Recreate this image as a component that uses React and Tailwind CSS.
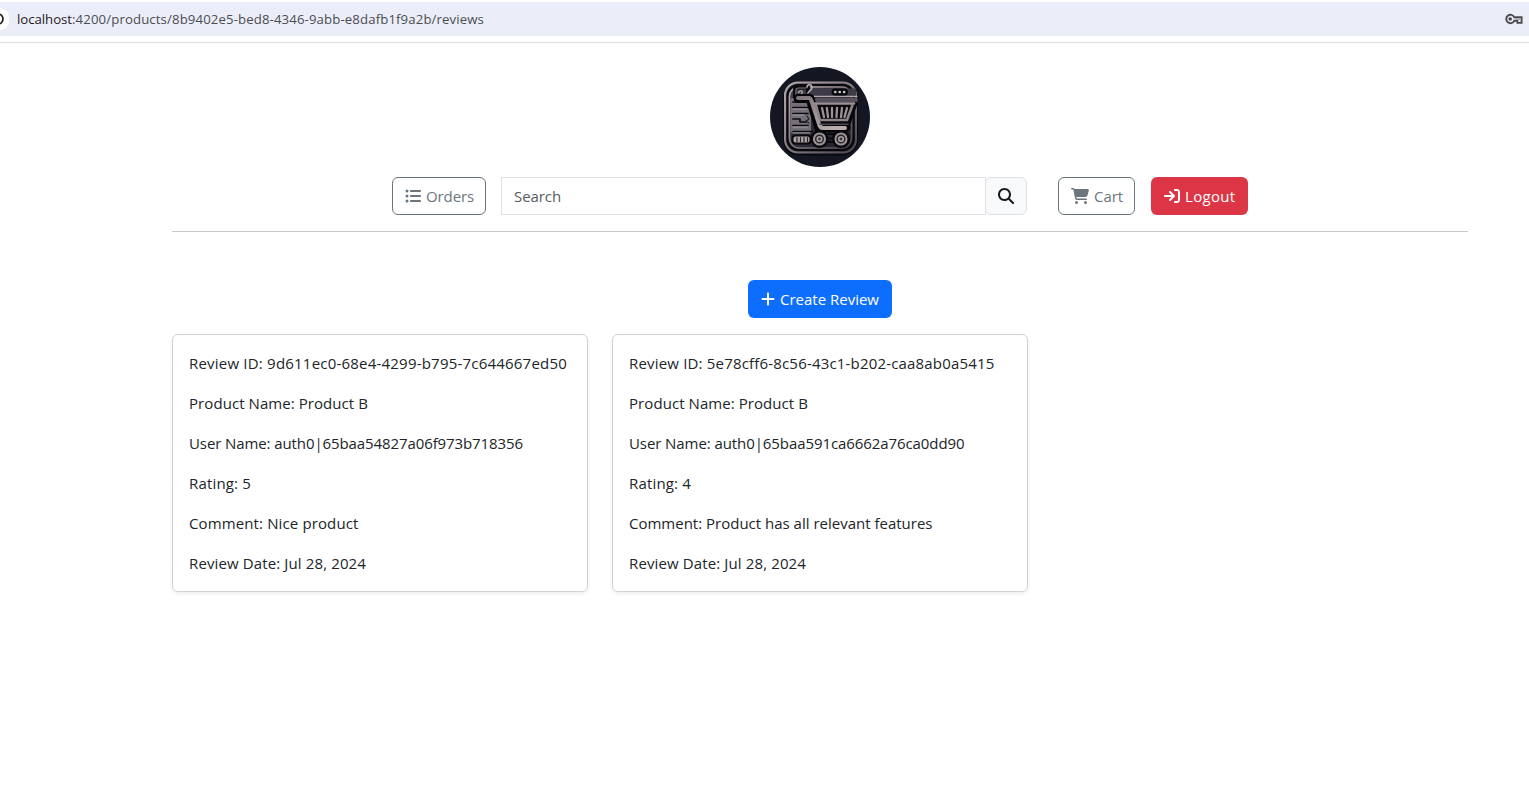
import React from 'react';
import { FaListUl, FaMagnifyingGlass, FaCartShopping, FaArrowRightToBracket, FaPlus } from 'react-icons/fa6';

const reviews = [
  [
    { text: 'Review ID: 9d611ec0-68e4-4299-b795-7c644667ed50', width: 378 },
    { text: 'Product Name: Product B', width: 179 },
    { text: 'User Name: auth0|65baa54827a06f973b718356', width: 334 },
    { text: 'Rating: 5', width: 62 },
    { text: 'Comment: Nice product', width: 169.5 },
    { text: 'Review Date: Jul 28, 2024', width: 177 },
  ],
  [
    { text: 'Review ID: 5e78cff6-8c56-43c1-b202-caa8ab0a5415', width: 365.5 },
    { text: 'Product Name: Product B', width: 179 },
    { text: 'User Name: auth0|65baa591ca6662a76ca0dd90', width: 335.5 },
    { text: 'Rating: 4', width: 62 },
    { text: 'Comment: Product has all relevant features', width: 303.5 },
    { text: 'Review Date: Jul 28, 2024', width: 177 },
  ],
];

// Spreads the glyphs so that the text fills exactly the given width.
function FitText({ text, width }) {
  const ref = React.useRef(null);
  React.useLayoutEffect(() => {
    const el = ref.current;
    el.style.letterSpacing = '0px';
    const natural = el.getBoundingClientRect().width;
    el.style.letterSpacing = `${(width - natural) / text.length}px`;
  }, [text, width]);
  return <span ref={ref} className="inline-block whitespace-pre">{text}</span>;
}

function Logo() {
  return (
    <svg viewBox="0 0 100 100" className="size-[100px]" fill="none" strokeLinecap="round" strokeLinejoin="round">
      <defs>
        <linearGradient id="metal" x1="0" y1="0" x2="1" y2="1">
          <stop offset="0" stopColor="#b5a9aa" />
          <stop offset="0.5" stopColor="#857a80" />
          <stop offset="1" stopColor="#4b4550" />
        </linearGradient>
        <linearGradient id="panel" x1="0" y1="0" x2="1" y2="1">
          <stop offset="0" stopColor="#45424f" />
          <stop offset="1" stopColor="#1b1a24" />
        </linearGradient>
        <linearGradient id="cart" gradientUnits="userSpaceOnUse" x1="30" y1="30" x2="60" y2="64">
          <stop offset="0" stopColor="#80767b" />
          <stop offset="1" stopColor="#b9adac" />
        </linearGradient>
      </defs>
      <circle cx="50" cy="50" r="50" fill="#141722" />
      <rect x="13" y="15.5" width="75" height="73" rx="15" fill="#090a10" />
      <rect x="15" y="15.5" width="71" height="70" rx="13" fill="url(#panel)" stroke="url(#metal)" strokeWidth="2" />
      <rect x="17.5" y="18" width="66" height="65" rx="11" stroke="#08080d" strokeWidth="2" />
      <rect x="19.5" y="20" width="62" height="61" rx="9.5" stroke="url(#metal)" strokeWidth="1.6" />
      <path d="M40 26H86" stroke="#3e3a47" strokeWidth="9" strokeLinecap="butt" />
      <path d="M42 29.3H87" stroke="#b1a7ab" strokeWidth="1.3" />
      <path d="M47 33H86" stroke="#55505b" strokeWidth="4" />
      <rect x="61.5" y="21.5" width="16.5" height="7" rx="3.5" fill="#09090e" />
      <g fill="#d2cacd">
        <circle cx="65.3" cy="25" r="1.3" />
        <circle cx="69.7" cy="25" r="1.3" />
        <circle cx="74.1" cy="25" r="1.3" />
      </g>
      <path d="M25 31V23Q25 20.5 28 20.5H38V29" stroke="#09090e" strokeWidth="4" />
      <path d="M26 28V23Q26 21 29 21H36" stroke="#877d84" strokeWidth="1.2" />
      <path d="M28.5 25.5Q31.5 22 32.5 25.5L30 28.5H34" stroke="#a99fa4" strokeWidth="1.5" />
      <path d="M37 20Q38 16.5 41 18Q43.5 20.5 40 23.5L38 26" stroke="#b8adb0" strokeWidth="1.7" />
      <rect x="20.5" y="31" width="20.5" height="35" rx="2" fill="#756f78" />
      <path d="M23 35H27M23 40.5H38M23 46.5H38M23 52H30V55H36M23 58.5H38M23 64.5H42" stroke="#0b0b10" strokeWidth="1.7" />
      <path d="M23 42H37M23 48H34M23 60H38M23 66H40" stroke="#aaa1a6" strokeWidth="0.9" />
      <path d="M37 49L39 52L36 54L39 56" stroke="#211f28" strokeWidth="1.1" />
      <rect x="22.5" y="68.5" width="18" height="8" rx="3" fill="#b0a5a5" stroke="#08080d" strokeWidth="2" />
      <path d="M27 70.5V75M30.5 70.5V75M34 70.5V75M37.5 70.5V75" stroke="#23212a" strokeWidth="1.2" />
      <path d="M28 31.5H40L49 61L76 60.5" stroke="#050509" strokeWidth="9" />
      <path d="M43 36.5H86L79 57H49Z" fill="#08080d" stroke="#08080d" strokeWidth="3" />
      <path d="M28 31H39Q40.5 31 41.5 34L49 57Q50 61 53 61H75" stroke="url(#cart)" strokeWidth="4" />
      <path d="M45 36.5H84" stroke="#9a9095" strokeWidth="2.6" />
      <path d="M82.5 38L77 53H50L46 38" stroke="#8d8388" strokeWidth="2.6" />
      <path d="M52 41L54 50M56.8 41L58 50M62 41V50M67 41L66.5 50M72 41L71 50M77 41L74.5 50" stroke="#9b9196" strokeWidth="2.3" />
      <path d="M50 57.3H78" stroke="#4b4550" strokeWidth="1.5" />
      <path d="M56 67H65M57 71.5H63M57 75H63" stroke="#09090e" strokeWidth="1.8" />
      <g stroke="#08080d" strokeWidth="2.5" fill="#9d9396">
        <circle cx="49.5" cy="72" r="7.8" />
        <circle cx="71" cy="72" r="7.8" />
      </g>
      <g stroke="#25232b" strokeWidth="1.4" fill="#a89d9f">
        <circle cx="49.5" cy="72" r="3.8" />
        <circle cx="71" cy="72" r="3.8" />
      </g>
      <g fill="#3a3740">
        <circle cx="49.5" cy="72" r="1.4" />
        <circle cx="71" cy="72" r="1.4" />
      </g>
    </svg>
  );
}

function KeyIcon() {
  return (
    <svg viewBox="0 0 20 14" className="h-3.5 w-5" fill="none" stroke="#4b4c50" strokeWidth="1.9">
      <path d="M10.2 5.2A4.2 4.2 0 1 0 10.2 8.8H13.4V10.9H17.6V5.2Z" />
      <path d="M11 7H17" stroke="#a5a7ae" strokeWidth="1.6" />
      <circle cx="6.2" cy="7" r="1.8" fill="#474747" stroke="none" />
    </svg>
  );
}

function AddressBar() {
  return (
    <div className="flex h-[43px] w-full flex-col border-b border-[#dedfe0] pt-0.5">
      <div className="flex h-[34px] items-center justify-between bg-[#ebeef8] pr-[5px]">
        <div className="flex items-center">
          <div className="flex h-[22px] w-[9px] items-center rounded-r-full bg-white">
            <svg viewBox="0 0 5 12" className="h-3 w-[5px]" fill="none" stroke="#1f1f1f" strokeWidth="1.7">
              <path d="M-2 1A5 5 0 0 1 -2 11" />
            </svg>
          </div>
          <div className="ml-2 text-[13.2px] text-[#4b4d52]">
            <span className="text-[#1f2023]"><FitText text="localhost" width={55} /></span>
            <FitText text=":4200/products/8b9402e5-bed8-4346-9abb-e8dafb1f9a2b/reviews" width={412} />
          </div>
        </div>
        <KeyIcon />
      </div>
    </div>
  );
}

export default function App() {
  return (
    <div className="h-[794px] w-full overflow-hidden bg-white font-['Open_Sans',sans-serif] text-[15px] leading-6 text-[#212529]">
      <AddressBar />
      <div className="flex w-[1640px] flex-col items-center pt-6">
        <Logo />
        <div className="mt-2.5 flex h-[38px]">
          <button className="flex w-[94px] items-center rounded-md border border-[#6c757d] pl-3 text-[#6c757d]">
            <FaListUl className="mr-[5px] size-4" />
            <FitText text="Orders" width={48} />
          </button>
          <div className="ml-[15px] flex w-[526px]">
            <div className="flex w-[485px] items-center border border-[#dee2e6] pl-3 text-[#595c5f]">
              <FitText text="Search" width={47} />
            </div>
            <button className="-ml-px flex w-[42px] items-center justify-center rounded-md border border-[#dee2e6] bg-[#f8f9fa] text-[#17191c]">
              <FaMagnifyingGlass className="size-4" />
            </button>
          </div>
          <button className="ml-[31px] flex w-[77px] items-center rounded-md border border-[#6c757d] pl-3 text-[#6c757d]">
            <FaCartShopping className="mr-[5px] h-4 w-[18px]" />
            <FitText text="Cart" width={29} />
          </button>
          <button className="ml-4 flex w-[97px] items-center rounded-md bg-[#dc3545] pl-[13px] text-white">
            <FaArrowRightToBracket className="mr-[5px] size-4" />
            <FitText text="Logout" width={50.5} />
          </button>
        </div>
        <div className="mt-4 h-px w-[1296px] bg-[#c7c8c9]" />
        <button className="mt-12 flex h-[38px] w-36 items-center rounded-md bg-[#0d6efd] pl-[13px] text-white">
          <FaPlus className="mr-[5px] h-4 w-3.5" />
          <FitText text="Create Review" width={99} />
        </button>
        <div className="mt-4 grid w-[1296px] grid-cols-3 gap-6">
          {reviews.map((lines, i) => (
            <div key={i} className="flex flex-col gap-4 rounded-md border border-[#d0d1d2] p-4 shadow-[0_2px_4px_rgba(0,0,0,0.075)]">
              {lines.map((line) => (
                <p key={line.text} className="h-6"><FitText {...line} /></p>
              ))}
            </div>
          ))}
        </div>
      </div>
    </div>
  );
}
